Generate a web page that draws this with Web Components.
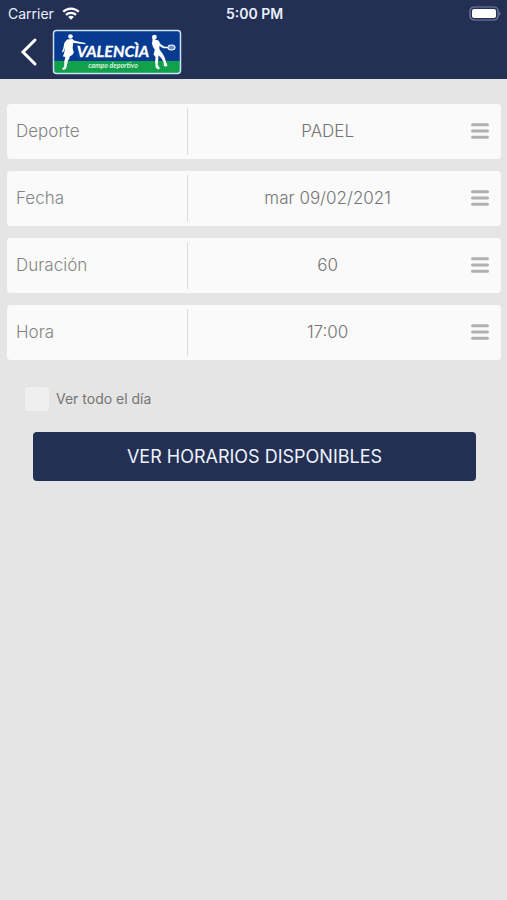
<!DOCTYPE html>
<html lang="es">
<head>
<meta charset="utf-8">
<meta name="viewport" content="width=device-width, initial-scale=1">
<title>Valencia campo deportivo</title>
<style>
  :root { --navy: #242f54; --panel: #fafafa; --page: #e5e5e5; --muted: #848484; --value: #747474; --bar: #b0b0b0; }
  body { margin: 0; min-height: 100vh; background: var(--page); font-family: Inter, "Liberation Sans", sans-serif; }
</style>
</head>
<body>
<booking-app></booking-app>
<script>
const define = (name, markup, setup) => {
  const template = document.createElement('template');
  template.innerHTML = markup;
  customElements.define(name, class extends HTMLElement {
    constructor() {
      super();
      this.attachShadow({ mode: 'open' }).append(template.content.cloneNode(true));
    }
    connectedCallback() { if (setup) setup(this, this.shadowRoot); }
  });
};

define('status-bar', `
  <style>
    :host { display: grid; grid-template-columns: 1fr auto 1fr; align-items: center; height: 27px; padding: 0 6px 0 8px; box-sizing: border-box; color: #e8f0fb; font-size: 14px; line-height: 20px; }
    .carrier { display: flex; align-items: center; gap: 8px; }
    .time { font-weight: 600; }
    .battery { justify-self: end; }
    svg { display: block; }
  </style>
  <div class="carrier"><span>Carrier</span>
    <svg width="18" height="13" viewBox="0 0 18 13" fill="none" stroke="#fff" stroke-width="2.3" aria-hidden="true">
      <path d="M1.2 4.8C5.6.5 12.4.5 16.8 4.8"/><path d="M4 7.8c2.8-2.7 7.2-2.7 10 0"/><path d="M9 12.7 6.2 9.9c1.6-1.4 4-1.4 5.6 0z" fill="#fff" stroke="none"/>
    </svg>
  </div>
  <span class="time">5:00 PM</span>
  <svg class="battery" width="32" height="15" viewBox="0 0 32 15" aria-hidden="true">
    <rect x="1" y="1" width="28" height="13" rx="4" fill="none" stroke="#7d849e" stroke-width="1.2"/>
    <rect x="3" y="3" width="24" height="9" rx="2" fill="#fff"/>
    <path d="M30.300 5.200c1.600.8 1.600 3.800 0 4.600z" fill="#7d849e"/>
  </svg>`);

define('club-logo', `
  <style>:host, svg { display: block; }</style>
  <svg width="130" height="46" viewBox="0 0 130 46" role="img" aria-label="Valencia campo deportivo">
    <rect x="1.500" y="1.500" width="127" height="43" rx="3" fill="#063b91"/>
    <path d="M2 32h126v10q0 2-2 2H4q-2 0-2-2z" fill="#12a14b"/>
    <rect x="1.500" y="1.500" width="127" height="43" rx="3" fill="none" stroke="#c9e2f6" stroke-width="1.500"/>
    <g fill="#fff">
      <circle cx="18.500" cy="7.500" r="2.300"/>
      <path d="M15 10.500 20.500 10 22 11.500 27 12.700 33.500 14 33.200 15.200 26.500 14.600 21.300 13.800 20.600 19 21.800 23.500 20.300 26 17.500 27.500 16 31.500 15 35.500 14.200 39.500 11.500 41 10 40 12.200 37.500 12.300 32 13.600 28 11 27.500 12.600 22 13.500 17.500 12.200 21.500 10.800 23.500 10 22.700 11.300 19.500 12.300 14z"/>
      <path d="M13.500 26 17.500 26.500 17.300 29.500 15.500 32 13.500 31z"/>
      <circle cx="102.500" cy="8" r="2.300"/>
      <path d="M100.500 6.500 103 10.500 106.500 11.500 108.500 15 112 17.500 116.500 18 116.300 19.200 111.500 19.300 107.300 17 107.500 20.500 110.500 24.500 112.500 28 114.200 33.500 115.500 36.500 113.500 37.800 111.800 36.500 111.600 33 108.800 28.500 106.500 26.500 106.200 31 105.600 35.500 108 39.500 106 40.500 103.700 38.500 103.200 33 103.500 28 101.500 25.500 102.800 20.500 101 18 100 14.500 100.500 11z"/>
    </g>
    <ellipse cx="119.500" cy="18.500" rx="3.500" ry="2.500" fill="#6e91c8" stroke="#fff" stroke-width="1.100"/>
    <text x="61" y="28" fill="#fff" stroke="#fff" stroke-width=".3" text-anchor="middle" font-family="Lato, sans-serif" font-size="16" font-weight="700" font-style="italic">VALENCÌA</text>
    <text x="61" y="39" fill="#d8f2df" text-anchor="middle" font-family="Lato, sans-serif" font-size="7" font-weight="700" font-style="italic">campo deportivo</text>
  </svg>`);

define('nav-bar', `
  <style>
    :host { display: flex; align-items: center; gap: 10px; height: 52px; padding: 0 16px 3px; box-sizing: border-box; }
    button { display: grid; place-items: center; width: 26px; height: 44px; padding: 0; border: 0; background: none; }
  </style>
  <button type="button" aria-label="Volver">
    <svg width="20" height="30" viewBox="0 0 20 30" fill="none" stroke="#fff" stroke-width="3" stroke-linecap="round" aria-hidden="true"><path d="M16 3 4 15 16 27"/></svg>
  </button>
  <slot></slot>`);

define('picker-row', `
  <style>
    :host { display: flex; align-items: center; height: 55px; border-radius: 4px; background: var(--panel); box-sizing: border-box; font-size: 17px; }
    label { flex: 0 0 36.500%; padding: 0 8px 1px 9px; box-sizing: border-box; color: var(--muted); font-weight: 300; line-height: 24px; }
    .field { flex: 1; display: grid; grid-template-columns: 1fr 34px; align-items: center; border-left: 1px solid #dcdcdc; height: 47px; }
    select { appearance: none; grid-area: 1 / 1; width: 100%; height: 47px; margin: 0; padding: 0 0 2px; border: 0; background: none; color: var(--value); font: inherit; font-weight: 300; line-height: 24px; text-align: center; text-align-last: center; }
    svg { display: block; margin: 0 0 2px 3px; }
  </style>
  <label for="choice"></label>
  <div class="field">
    <select id="choice"><option></option></select>
    <svg width="20" height="18" viewBox="0 0 20 18" stroke="var(--bar)" stroke-width="3" stroke-linecap="round" aria-hidden="true"><path d="M2.500 2.800h15M2.500 9h15M2.500 15.200h15"/></svg>
  </div>`, (host, root) => {
    root.querySelector('label').textContent = host.getAttribute('label');
    root.querySelector('option').textContent = host.getAttribute('value');
  });

define('check-option', `
  <style>
    :host { display: flex; align-items: center; gap: 7px; color: var(--value); }
    input { appearance: none; width: 24px; height: 24px; margin: 0; border-radius: 3px; background: #efefef; }
    input:checked { background: var(--navy); }
    label { line-height: 20px; font-size: 14px; }
  </style>
  <input id="all-day" type="checkbox"><label for="all-day"><slot></slot></label>`);

define('primary-button', `
  <style>
    :host { display: block; }
    button { display: block; width: 100%; height: 49px; padding: 0; border: 0; border-radius: 4px; background: var(--navy); color: #edf3fb; font: inherit; font-size: 18px; line-height: 24px; }
  </style>
  <button type="button"><slot></slot></button>`);

define('booking-app', `
  <style>
    :host { display: block; }
    header { background: var(--navy); }
    main { display: flex; flex-direction: column; gap: 12px; padding: 25px 6px 24px 7px; }
    check-option { margin: 15px 18px 0; }
    primary-button { margin: 9px 25px 0 26px; }
  </style>
  <header>
    <status-bar></status-bar>
    <nav-bar><club-logo></club-logo></nav-bar>
  </header>
  <main>
    <picker-row label="Deporte" value="PADEL"></picker-row>
    <picker-row label="Fecha" value="mar 09/02/2021"></picker-row>
    <picker-row label="Duración" value="60"></picker-row>
    <picker-row label="Hora" value="17:00"></picker-row>
    <check-option>Ver todo el día</check-option>
    <primary-button>VER HORARIOS DISPONIBLES</primary-button>
  </main>`);
</script>
</body>
</html>
